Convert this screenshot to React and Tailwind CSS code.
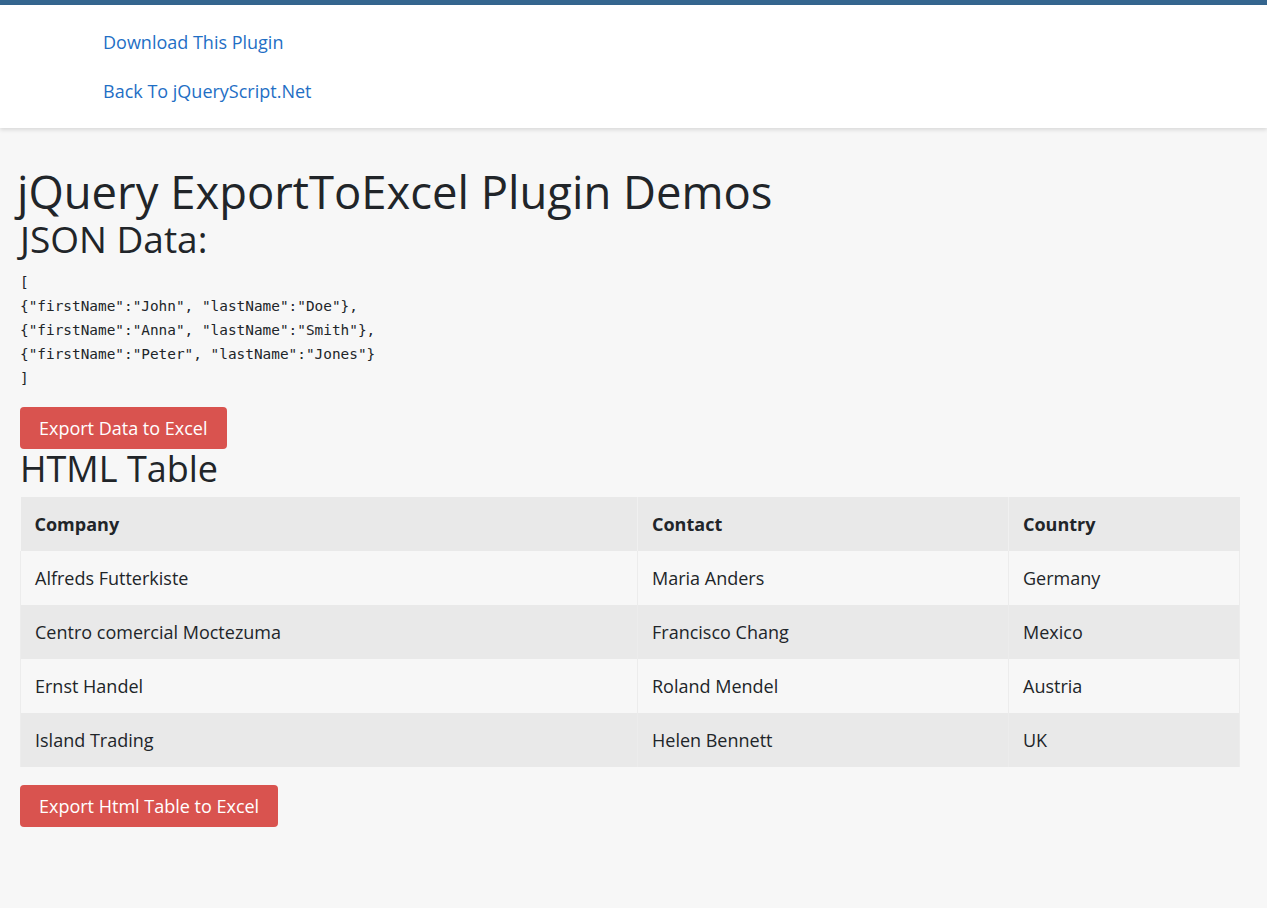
const rows = [
  ['Alfreds Futterkiste', 'Maria Anders', 'Germany'],
  ['Centro comercial Moctezuma', 'Francisco Chang', 'Mexico'],
  ['Ernst Handel', 'Roland Mendel', 'Austria'],
  ['Island Trading', 'Helen Bennett', 'UK'],
]

const json = `[
{"firstName":"John", "lastName":"Doe"},
{"firstName":"Anna", "lastName":"Smith"},
{"firstName":"Peter", "lastName":"Jones"}
]`

export default function App() {
  return (
    <div className="min-h-[908px] bg-[#f7f7f7] text-[#212529] font-['Open_Sans',sans-serif]">
      <div className="h-[5px] bg-[#35668f]" />
      <header className="bg-white h-[123px] shadow-[0_2px_4px_rgba(0,0,0,0.12)] pl-[103px] pt-[25px] flex flex-col gap-[24px] text-[18px] leading-[25px]">
        <a href="#" className="text-[#1f6fc5]">Download This Plugin</a>
        <a href="#" className="text-[#1f6fc5]">Back To jQueryScript.Net</a>
      </header>

      <main className="px-[20px] pt-[39px]">
        <h1 className="text-[45.4px] leading-[48px] -ml-[3px]">jQuery ExportToExcel Plugin Demos</h1>
        <h2 className="text-[37px] leading-[40px] mt-[4px]">JSON Data:</h2>
        <pre className="mt-[11px] font-['DejaVu_Sans_Mono',monospace] text-[14.4px] leading-[24px] text-[#212529]">{json}</pre>
        <button className="mt-[17px] h-[42px] px-[19px] rounded-[4px] bg-[#d9534f] text-white text-[18px]">Export Data to Excel</button>
        <h2 className="text-[36px] leading-[42px] -mt-[1px]">HTML Table</h2>

        <table className="mt-[7px] w-[1220px] border-collapse text-[18px]">
          <thead>
            <tr className="bg-[#e9e9e9] h-[54px]">
              <th className="text-left font-bold px-[14px] w-[617px] border-r border-[#f0f0f0]">Company</th>
              <th className="text-left font-bold px-[14px] w-[371px] border-r border-[#f0f0f0]">Contact</th>
              <th className="text-left font-bold px-[14px]">Country</th>
            </tr>
          </thead>
          <tbody>
            {rows.map((r, i) => (
              <tr key={i} className={`${i % 2 === 0 ? 'bg-[#f7f7f7]' : 'bg-[#e9e9e9]'} h-[54px]`}>
                <td className="px-[14px] border-l border-r border-[#ececec]">{r[0]}</td>
                <td className="px-[14px] border-r border-[#ececec]">{r[1]}</td>
                <td className="px-[14px] border-r border-[#ececec]">{r[2]}</td>
              </tr>
            ))}
          </tbody>
        </table>

        <button className="mt-[18px] h-[42px] px-[19px] rounded-[4px] bg-[#d9534f] text-white text-[18px]">Export Html Table to Excel</button>
      </main>
    </div>
  )
}
